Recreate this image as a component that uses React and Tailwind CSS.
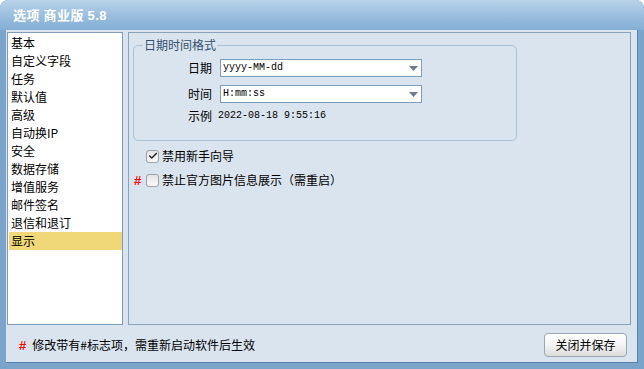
import { Check } from 'lucide-react';

const cjk = { fontFamily: '"Noto Sans CJK SC", "Liberation Sans", sans-serif' };
const mono = { fontFamily: '"Liberation Mono", monospace' };

const menuItems = [
  '基本', '自定义字段', '任务', '默认值', '高级', '自动换IP',
  '安全', '数据存储', '增值服务', '邮件签名', '退信和退订', '显示',
];

function Combo({ value }) {
  return (
    <div className="w-[202px] h-[18px] bg-white border border-[#7f9db9] flex items-center justify-between pl-[2px] pr-[3px]">
      <span className="text-[10px] text-black leading-none" style={mono}>{value}</span>
      <svg width="9" height="5" viewBox="0 0 9 5">
        <path d="M0 0 H9 L4.5 5 Z" fill="#6b7d8e" />
      </svg>
    </div>
  );
}

function CheckRow({ checked, flag, label }) {
  return (
    <div className="flex items-center h-[18px] pl-[5px]">
      <span className="w-[12px] text-[13px] font-bold text-[#ff0000] leading-none" style={{ fontFamily: '"Liberation Sans", sans-serif' }}>
        {flag ? '#' : ''}
      </span>
      <span className="w-[13px] h-[13px] rounded-[3px] border border-[#9aa3ad] bg-gradient-to-b from-[#e4e4e4] to-[#fbfbfb] flex items-center justify-center">
        {checked && <Check className="w-[10px] h-[10px] text-[#222]" strokeWidth={3.5} />}
      </span>
      <span className="ml-[3px] text-[12px] text-black leading-none">{label}</span>
    </div>
  );
}

export default function App() {
  return (
    <div className="w-[644px] h-[369px] bg-[#7aa4ca] rounded-t-[8px] flex flex-col overflow-hidden select-none" style={cjk}>
      {/* 标题栏 */}
      <div className="h-[30px] shrink-0 bg-gradient-to-b from-[#b9d3ea] via-[#9cbfdf] to-[#83aed4] flex items-center pl-[13px] rounded-t-[8px]">
        <span className="text-white font-bold text-[13px] leading-none tracking-[0.5px]">
          选项 商业版 <span style={{ fontFamily: '"Liberation Sans", sans-serif' }}>5.8</span>
        </span>
      </div>

      {/* 客户区 */}
      <div className="ml-[6px] mr-[6px] mb-[6px] flex-1 bg-[#dae4ee] border-r border-b border-[#5683ae] flex flex-col pt-[2px]">
        <div className="flex h-[293px] shrink-0">
          {/* 左侧菜单 */}
          <div className="ml-[1px] w-[116px] bg-white border border-[#7f9db9] pt-[1px] pl-[1px]">
            {menuItems.map((item) => (
              <div
                key={item}
                className={`h-[18px] flex items-center pl-[2px] text-[12px] text-black leading-none ${item === '显示' ? 'bg-[#f0d878]' : ''}`}
              >
                {item}
              </div>
            ))}
          </div>

          {/* 右侧面板 */}
          <div className="ml-[5px] w-[503px] border border-[#8aa3ba] bg-[#dae4ee] flex flex-col">
            <div className="relative mt-[12px] ml-[4px] w-[384px] h-[96px] border border-[#a9c0d5] rounded-[5px] pt-[13px]">
              <span className="absolute -top-[8px] left-[9px] px-[1px] bg-[#dae4ee] text-[12px] leading-[14px] text-[#34506e]">
                日期时间格式
              </span>
              <div className="flex items-center h-[18px] pl-[54px]">
                <span className="w-[32px] text-[12px] text-black leading-none">日期</span>
                <Combo value="yyyy-MM-dd" />
              </div>
              <div className="flex items-center h-[18px] pl-[54px] mt-[8px]">
                <span className="w-[32px] text-[12px] text-black leading-none">时间</span>
                <Combo value="H:mm:ss" />
              </div>
              <div className="flex items-center h-[18px] pl-[54px] mt-[4px]">
                <span className="w-[30px] text-[12px] text-black leading-none">示例</span>
                <span className="text-[10px] text-black leading-none" style={mono}>2022-08-18 9:55:16</span>
              </div>
            </div>

            <div className="mt-[6px] flex flex-col gap-[6px]">
              <CheckRow checked label="禁用新手向导" />
              <CheckRow flag label="禁止官方图片信息展示（需重启）" />
            </div>
          </div>
        </div>

        {/* 底部 */}
        <div className="flex-1 flex items-center justify-between pl-[13px] pr-[10px] pt-[3px]">
          <div className="flex items-center">
            <span className="text-[13px] font-bold text-[#ff0000] leading-none" style={{ fontFamily: '"Liberation Sans", sans-serif' }}>#</span>
            <span className="ml-[6px] text-[12px] text-black leading-none">修改带有#标志项，需重新启动软件后生效</span>
          </div>
          <button className="w-[83px] h-[24px] rounded-[4px] border border-[#9aa6b3] bg-gradient-to-b from-[#ffffff] via-[#f3f3f3] to-[#dcdcdc] text-[12px] text-black leading-none">
            关闭并保存
          </button>
        </div>
      </div>
    </div>
  );
}
